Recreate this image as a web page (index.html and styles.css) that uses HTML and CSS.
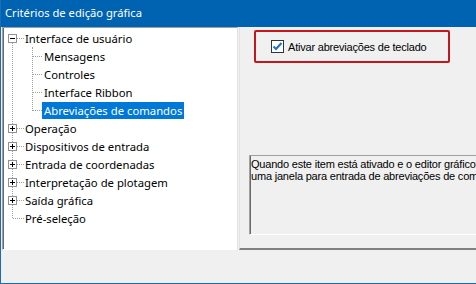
FILE: index.html
```html
<!DOCTYPE html>
<html lang="pt">
<head>
    <meta charset="UTF-8">
    <title>Critérios de edição gráfica</title>
    <link rel="stylesheet" href="styles.css">
</head>
<body>
    <div class="window">
        <div class="titlebar">Critérios de edição gráfica</div>
        <div class="panes">
            <div class="tree">
                <div class="row"><span class="exp"></span><span class="stem"></span><span class="label">Interface de usuário</span></div>
                <div class="kids">
                    <div class="row"><span class="stem child"></span><span class="label">Mensagens</span></div>
                    <div class="row"><span class="stem child"></span><span class="label">Controles</span></div>
                    <div class="row"><span class="stem child"></span><span class="label">Interface Ribbon</span></div>
                    <div class="row"><span class="stem child"></span><span class="label selected">Abreviações de comandos</span></div>
                </div>
                <div class="row"><span class="exp plus"></span><span class="stem"></span><span class="label">Operação</span></div>
                <div class="row"><span class="exp plus"></span><span class="stem"></span><span class="label">Dispositivos de entrada</span></div>
                <div class="row"><span class="exp plus"></span><span class="stem"></span><span class="label">Entrada de coordenadas</span></div>
                <div class="row"><span class="exp plus"></span><span class="stem"></span><span class="label">Interpretação de plotagem</span></div>
                <div class="row"><span class="exp plus"></span><span class="stem"></span><span class="label">Saída gráfica</span></div>
                <div class="row"><span class="stem leaf"></span><span class="label">Pré-seleção</span></div>
            </div>
            <div class="settings">
                <div class="mark">
                    <label class="check">
                        <svg class="box" width="13" height="13" viewBox="0 0 13 13">
                            <rect x="0.5" y="0.5" width="12" height="12" fill="#fff" stroke="#333"/>
                            <path d="M2.5 6.5 L5 9 L10.5 3" fill="none" stroke="#1a6fd1" stroke-width="2"/>
                        </svg>
                        <span>Ativar abreviações de teclado</span>
                    </label>
                </div>
                <div class="help">Quando este item está ativado e o editor gráfico<br>uma janela para entrada de abreviações de comandos</div>
            </div>
        </div>
    </div>
</body>
</html>
```

FILE: styles.css
```css
body {
    margin: 0;
    background-color: #f0f0f0;
    font-family: "Noto Sans", sans-serif;
}
.window {
    width: 476px;
    height: 284px;
    box-sizing: border-box;
    border-left: 1px solid #1a6bb8;
    border-bottom: 1px solid #1a6bb8;
    overflow: hidden;
}
.titlebar {
    height: 27px;
    background-color: #0063b1;
    color: #fff;
    font-size: 11.2px;
    line-height: 26px;
    padding-left: 4px;
}
.panes {
    display: flex;
    gap: 1px;
}
/* Tree on the left */
.tree {
    flex: none;
    position: relative;
    margin-left: 1px;
    width: 236px;
    height: 223px;
    box-sizing: border-box;
    padding-top: 1px;
    background-color: #fff;
    border: 1px solid;
    border-color: #a0a0a0 #e3e3e3 #fff #a0a0a0;
    box-shadow: inset 1px 0 #696969;
    font-size: 11.3px;
    color: #000;
}
.tree::before {
    content: "";
    position: absolute;
    left: 9px;
    top: 14px;
    height: 176px;
    border-left: 1px dotted #a0a0a0;
}
.kids {
    position: relative;
}
.kids::before {
    content: "";
    position: absolute;
    left: 29px;
    top: 0;
    height: 64px;
    border-left: 1px dotted #a0a0a0;
}
.row {
    display: flex;
    align-items: center;
    height: 18px;
}
.exp {
    position: relative;
    width: 9px;
    height: 9px;
    box-sizing: border-box;
    margin-left: 5px;
    border: 1px solid #919191;
    background-color: #fff;
}
.exp::before {
    content: "";
    position: absolute;
    left: 1px;
    top: 3px;
    width: 5px;
    height: 1px;
    background-color: #000;
}
.exp.plus::after {
    content: "";
    position: absolute;
    left: 3px;
    top: 1px;
    width: 1px;
    height: 5px;
    background-color: #000;
}
.stem {
    width: 7px;
    border-top: 1px dotted #a0a0a0;
}
.stem.child {
    margin-left: 30px;
    width: 9px;
}
.stem.leaf {
    margin-left: 10px;
    width: 11px;
}
.label {
    padding: 0 1px;
    line-height: 17px;
    white-space: nowrap;
}
.stem.child + .label {
    padding: 0 2px;
}
.label.selected {
    background-color: #0078d7;
    color: #fff;
}
/* Options on the right */
.settings {
    flex: 1;
    min-width: 0;
    height: 223px;
    box-sizing: border-box;
    border-left: 1px solid #e3e3e3;
    border-bottom: 2px solid #808080;
    display: flex;
    flex-direction: column;
    font-family: "Liberation Sans", Arial, sans-serif;
    font-size: 11px;
    color: #000;
}
.mark {
    margin: 3px 0 0 14px;
    width: 196px;
    height: 33px;
    box-sizing: border-box;
    border: 2px solid #c4161c;
    border-radius: 2px;
    display: flex;
    align-items: center;
}
.check {
    display: flex;
    align-items: center;
    gap: 4px;
    margin-left: 15px;
    letter-spacing: -0.2px;
}
.box {
    display: block;
}
.help {
    margin: 92px 0 0 9px;
    width: 300px;
    height: 80px;
    box-sizing: border-box;
    border-top: 1px solid #a0a0a0;
    border-left: 1px solid #a0a0a0;
    border-bottom: 1px solid #fff;
    box-shadow: inset 1px 0 #696969;
    padding: 2px 0 0 1px;
    line-height: 12px;
    letter-spacing: -0.2px;
    white-space: nowrap;
}
```
